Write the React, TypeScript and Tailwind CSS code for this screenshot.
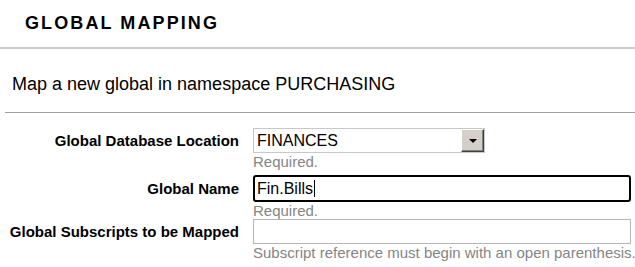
import { useState } from 'react'

const font = "font-['Liberation_Sans','Arial',sans-serif]"

function FieldRow({ label, help, children }: { label: string; help: string; children: React.ReactNode }) {
  return (
    <>
      <div className="flex items-center justify-end text-[15px] leading-[17px] font-bold text-black">{label}</div>
      <div className="flex items-center">{children}</div>
      <div />
      <div className="text-[15px] leading-[17px] text-[#858585] whitespace-nowrap">{help}</div>
    </>
  )
}

export default function App() {
  const [location] = useState('FINANCES')
  const [name] = useState('Fin.Bills')

  return (
    <div className={`${font} w-full h-[267px] bg-white text-black overflow-hidden`}>
      {/* header */}
      <div className="h-[47px] pt-[13px] pl-[25px]">
        <h1 className="text-[18px] leading-[21px] font-bold tracking-[2.1px]">GLOBAL MAPPING</h1>
      </div>
      <div className="h-[2px] bg-[#cccccc]" />

      {/* description */}
      <div className="ml-[5px] border-b-[1.5px] border-[#a0a0a0] h-[64px] pt-[25px] pl-[7px]">
        <p className="text-[18px] leading-[21px]">Map a new global in namespace PURCHASING</p>
      </div>

      {/* form */}
      <div className="pt-[15px] grid grid-cols-[239px_378px] gap-x-[14px]">
        <FieldRow label="Global Database Location" help="Required.">
          <div className="w-[232px] h-[25px] border border-[#c8c8c8] flex items-center">
            <span className="pl-[3px] text-[16px] leading-[19px]">{location}</span>
            <div className="ml-auto h-full w-[23px] bg-[#d4d0c8] border border-t-white border-l-white border-r-[#404040] border-b-[#404040] shadow-[inset_-1px_-1px_0_#808080] flex items-center justify-center">
              <div className="w-0 h-0 border-l-[4px] border-r-[4px] border-t-[4px] border-l-transparent border-r-transparent border-t-black" />
            </div>
          </div>
        </FieldRow>
        <div className="col-span-2 h-[5px]" />
        <FieldRow label="Global Name" help="Required.">
          <div className="w-[378px] h-[27px] border-2 border-black rounded-[3px] flex items-center pl-[2px]">
            <span className="text-[16px] leading-[19px]">{name}</span>
            <span className="w-px h-[17px] bg-black ml-[1px]" />
          </div>
        </FieldRow>
        <FieldRow label="Global Subscripts to be Mapped" help="Subscript reference must begin with an open parenthesis.">
          <div className="w-[378px] h-[25px] border border-[#b4b4b4]" />
        </FieldRow>
      </div>
    </div>
  )
}
